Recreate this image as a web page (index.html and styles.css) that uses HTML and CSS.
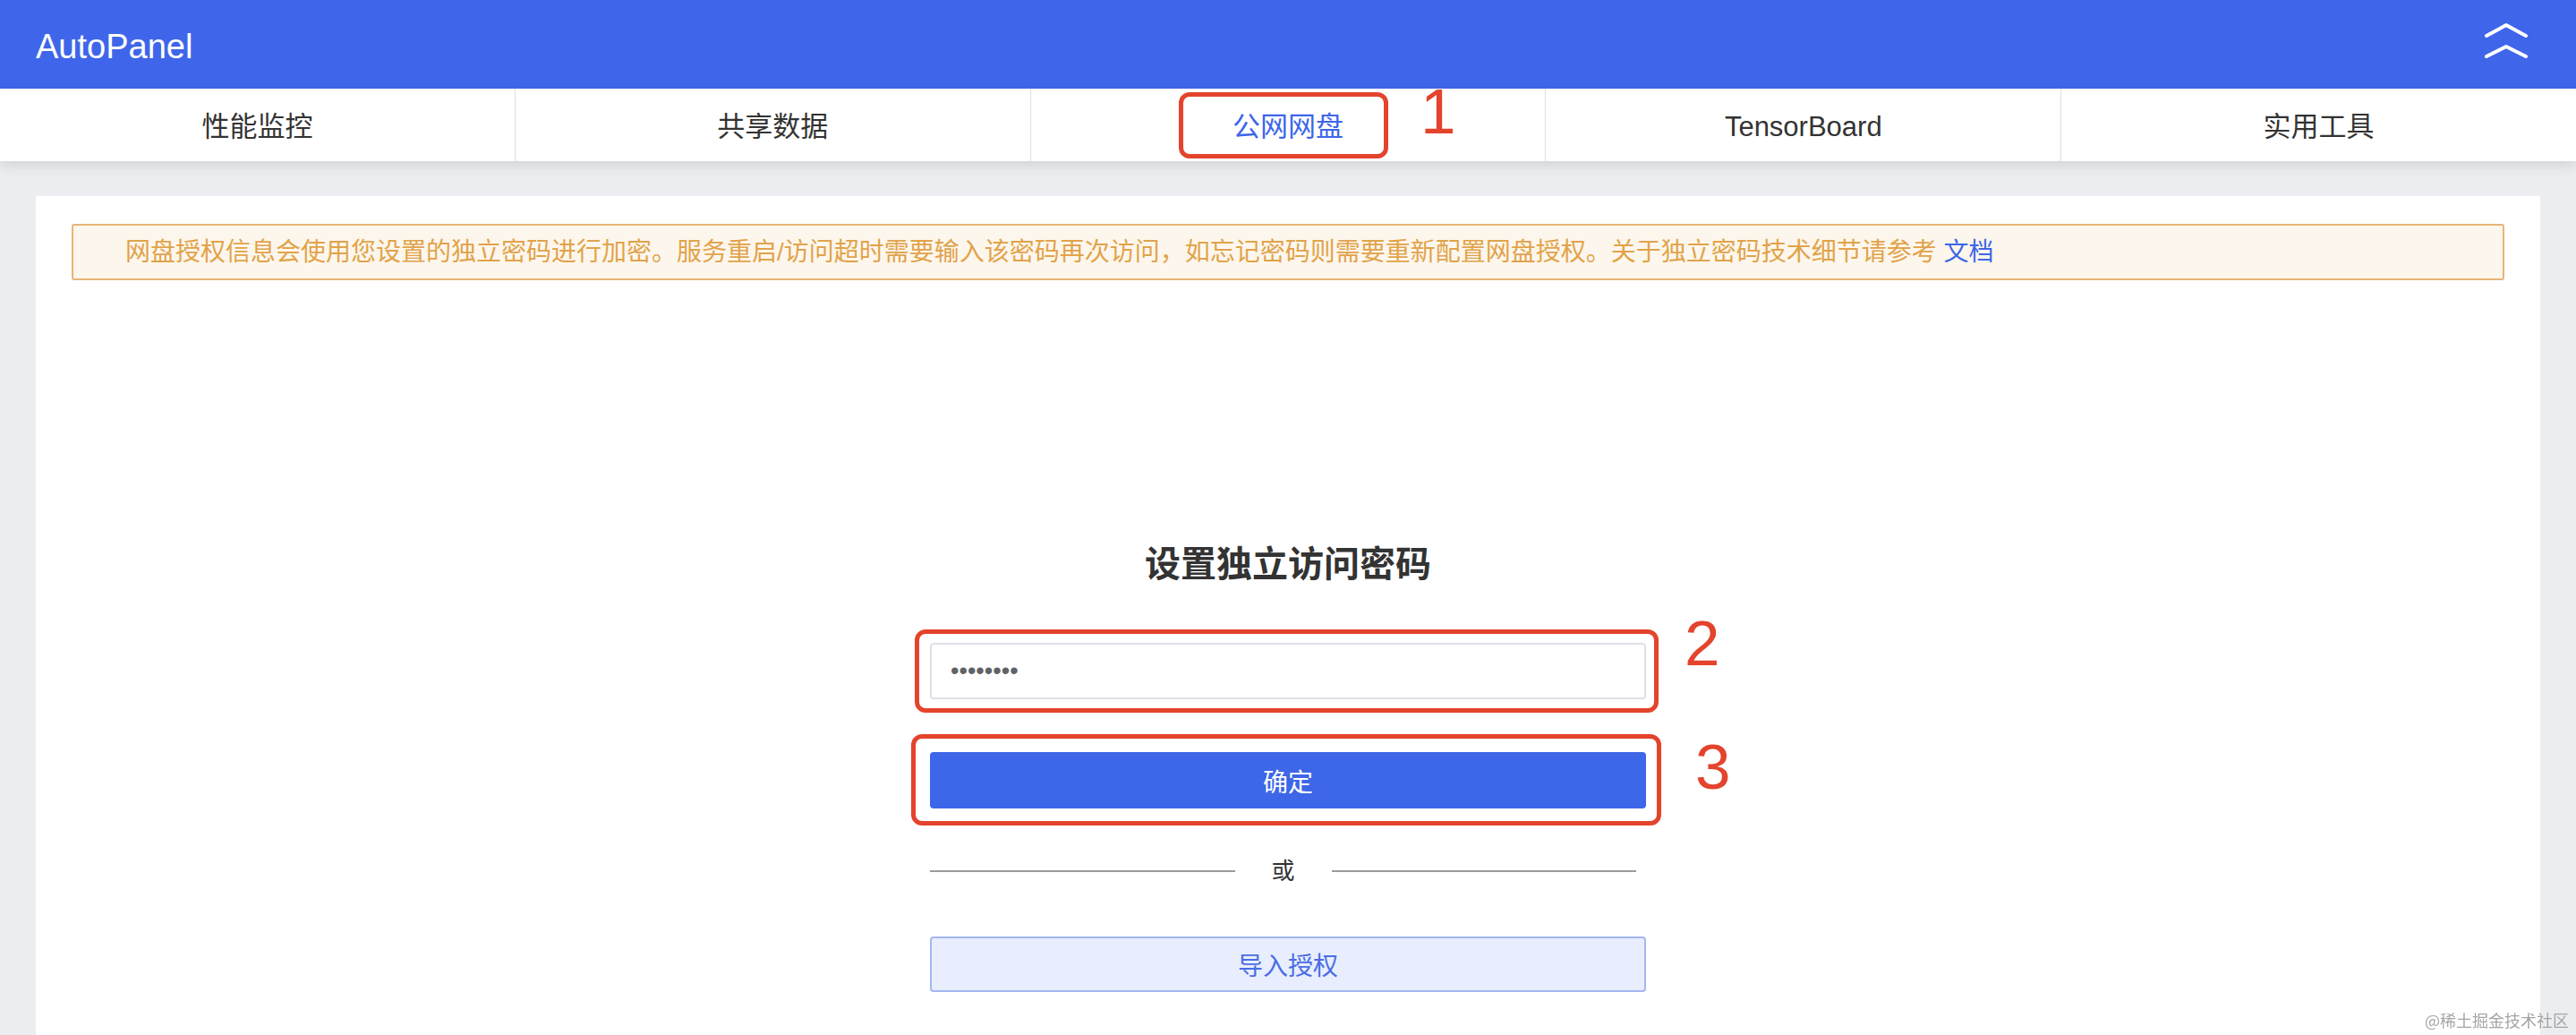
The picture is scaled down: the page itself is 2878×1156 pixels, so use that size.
FILE: index.html
```html
<!DOCTYPE html>
<html lang="zh-CN">
<head>
<meta charset="utf-8">
<title>AutoPanel</title>
<link rel="stylesheet" href="styles.css">
</head>
<body>
<header class="topbar">
  <div class="brand">AutoPanel</div>
  <svg class="collapse" width="52" height="44" viewBox="0 0 52 44" aria-hidden="true">
    <path d="M4 16 L26 4 L48 16" />
    <path d="M4 39 L26 28 L48 39" />
  </svg>
</header>
<nav class="tabs">
  <a class="tab"><span class="tab-label">性能监控</span></a>
  <a class="tab"><span class="tab-label">共享数据</span></a>
  <a class="tab active"><span class="tab-label">公网网盘<span class="mark mark-1"></span><span class="num num-1">1</span></span></a>
  <a class="tab"><span class="tab-label">TensorBoard</span></a>
  <a class="tab"><span class="tab-label">实用工具</span></a>
</nav>
<main class="main">
  <section class="card">
    <div class="alert">网盘授权信息会使用您设置的独立密码进行加密。服务重启/访问超时需要输入该密码再次访问，如忘记密码则需要重新配置网盘授权。关于独立密码技术细节请参考 <a class="doc-link">文档</a></div>
    <div class="form">
      <h2 class="form-title">设置独立访问密码</h2>
      <div class="field">
        <input class="pwd" type="password" value="12345678">
        <span class="mark mark-2"></span><span class="num num-2">2</span>
      </div>
      <div class="field field-btn">
        <button class="btn-primary">确定</button>
        <span class="mark mark-3"></span><span class="num num-3">3</span>
      </div>
      <div class="divider"><span class="line"></span><span class="or">或</span><span class="line"></span></div>
      <button class="btn-import">导入授权</button>
    </div>
  </section>
</main>
<div class="watermark">@稀土掘金技术社区</div>
</body>
</html>
```
FILE: styles.css
```css
* { box-sizing: border-box; }
html, body { margin: 0; padding: 0; }
body {
  background: #ebedf1;
  font-family: "Liberation Sans", "Noto Sans CJK SC", sans-serif;
  color: #333;
  min-height: 1156px;
}
.topbar {
  height: 99px;
  background: #3f66ea;
  display: flex;
  align-items: center;
  justify-content: space-between;
  padding: 0 52px 0 40px;
}
.brand {
  color: #fff;
  font-size: 38px;
  line-height: 38px;
  margin-top: 4px;
}
.collapse {
  margin-bottom: 7px;
  fill: none;
  stroke: #fff;
  stroke-width: 4;
  stroke-linecap: round;
  stroke-linejoin: round;
}
.tabs {
  position: relative;
  z-index: 2;
  display: flex;
  height: 81px;
  background: #fff;
  box-shadow: 0 4px 14px rgba(0, 0, 0, 0.12);
}
.tab {
  flex: 1;
  text-align: center;
  font-size: 31px;
  line-height: 77px;
  padding-top: 4px;
  color: #333;
  border-right: 1px solid #dedfe3;
}
.tab:last-child { border-right: none; }
.tab.active { color: #3d66e8; }
.tab-label {
  position: relative;
  display: inline-block;
}
.mark {
  position: absolute;
  border: 5px solid #e4432c;
  border-radius: 12px;
  pointer-events: none;
}
.num {
  position: absolute;
  font-family: "Liberation Sans", sans-serif;
  font-size: 71px;
  line-height: 71px;
  color: #e4432c;
  z-index: 3;
}
.mark-1 { left: -60px; right: -50px; top: 0; bottom: 3px; }
.num-1 { left: 210px; top: -14px; }
.main {
  padding: 39px 40px 0;
}
.card {
  background: #fff;
  padding: 31px 40px 60px;
}
.alert {
  height: 63px;
  border: 2px solid #e8b472;
  background: #fdf6ec;
  border-radius: 3px;
  padding-left: 58px;
  font-size: 28px;
  line-height: 59px;
  color: #e1a34a;
  white-space: nowrap;
}
.doc-link { color: #3d66e8; }
.form {
  width: 800px;
  margin: 289px auto 0;
}
.form-title {
  margin: 0;
  text-align: center;
  font-size: 40px;
  line-height: 56px;
  font-weight: bold;
  color: #333;
}
.field {
  position: relative;
  margin-top: 60px;
}
.field-btn { margin-top: 59px; }
.pwd {
  display: block;
  width: 100%;
  height: 63px;
  border: 2px solid #dfe1e8;
  border-radius: 4px;
  padding: 0 21px;
  font-family: "Liberation Sans", sans-serif;
  font-size: 27px;
  color: #606266;
  outline: none;
  background: #fff;
}
.mark-2 { left: -17px; right: -14px; top: -15px; bottom: -15px; }
.num-2 { left: 843px; top: -35px; }
.btn-primary {
  display: block;
  width: 100%;
  height: 63px;
  border: none;
  border-radius: 4px;
  background: #3d66e8;
  color: #fff;
  font-family: "Liberation Sans", "Noto Sans CJK SC", sans-serif;
  font-size: 28px;
}
.mark-3 { left: -21px; right: -17px; top: -20px; bottom: -19px; }
.num-3 { left: 855px; top: -19px; }
.divider {
  display: flex;
  align-items: center;
  height: 40px;
  margin-top: 50px;
  padding-right: 11px;
}
.line {
  flex: 1;
  height: 2px;
  background: #9a9a9a;
}
.or {
  margin: 0 41px;
  font-size: 26px;
  line-height: 40px;
  color: #333;
}
.btn-import {
  display: block;
  width: 100%;
  height: 62px;
  margin-top: 53px;
  border: 2px solid #a3b6ee;
  border-radius: 4px;
  background: #e8eefd;
  color: #4a6de6;
  font-family: "Liberation Sans", "Noto Sans CJK SC", sans-serif;
  font-size: 28px;
}
.watermark {
  position: fixed;
  right: 8px;
  bottom: 6px;
  font-family: "Noto Sans CJK SC", sans-serif;
  font-size: 18px;
  line-height: 22px;
  color: #a5a5a5;
}
```
